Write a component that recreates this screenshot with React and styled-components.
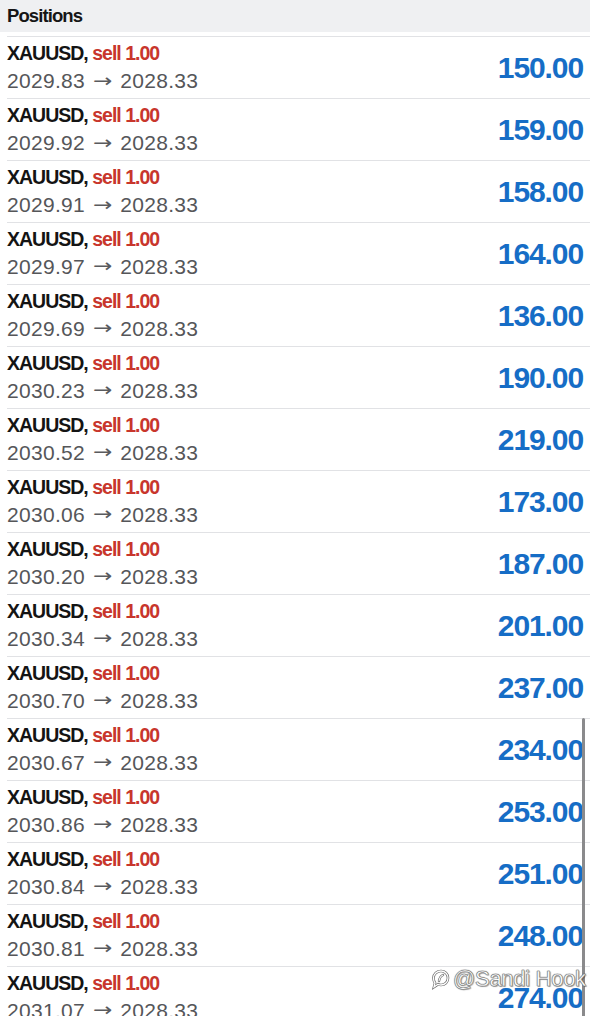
import React from "react";
import styled, { createGlobalStyle } from "styled-components";

const Global = createGlobalStyle`
  html, body { margin: 0; padding: 0; background: #ffffff; }
  body { font-family: "Liberation Sans", Arial, sans-serif; overflow: hidden; }
`;

const Screen = styled.div`
  position: relative;
  width: 590px;
  height: 1016px;
  overflow: hidden;
  background: #ffffff;
`;

const Header = styled.div`
  height: 32px;
  background: #eff0f2;
  display: flex;
  align-items: center;
  padding-left: 7px;
  font-weight: 700;
  font-size: 18.5px;
  letter-spacing: -0.9px;
  color: #161616;
`;

const List = styled.div`
  padding-top: 4px;
`;

const Row = styled.div`
  box-sizing: border-box;
  height: 62px;
  margin-left: 7px;
  padding-right: 7px;
  border-top: 1px solid #e1e2e5;
  display: flex;
  align-items: center;
  justify-content: space-between;
`;

const Info = styled.div`
  display: flex;
  flex-direction: column;
  align-self: flex-start;
  padding-top: 4px;
`;

const Title = styled.div`
  font-size: 19.5px;
  line-height: 24px;
  font-weight: 700;
  letter-spacing: -1px;
  color: #141414;
  white-space: nowrap;
`;

const Side = styled.span`
  color: #c8362c;
`;

const Prices = styled.div`
  font-size: 21px;
  line-height: 32px;
  height: 32px;
  color: #555659;
  white-space: nowrap;
  display: flex;
  align-items: baseline;
  letter-spacing: 0.3px;
`;

const Arrow = styled.span`
  font-family: "DejaVu Sans", sans-serif;
  font-size: 23px;
  line-height: 1;
  color: #5a5b5e;
  margin: 0 8px;
  transform: scaleY(0.8);
  display: inline-block;
  letter-spacing: 0;
`;

const Profit = styled.div`
  font-size: 30px;
  font-weight: 700;
  letter-spacing: -1.1px;
  color: #166dc6;
  padding-top: 1px;
`;

const ScrollBar = styled.div`
  position: absolute;
  right: 5px;
  top: 718px;
  bottom: 0;
  width: 3px;
  border-radius: 2px 2px 0 0;
  background: #8a8a8c;
`;

const Watermark = styled.div`
  position: absolute;
  left: 431px;
  top: 966px;
  display: flex;
  align-items: center;
  gap: 2px;
  font-family: "Liberation Sans", Arial, sans-serif;
  font-size: 22px;
  font-weight: 400;
  color: #ffffff;
  letter-spacing: -0.3px;
  text-shadow:
    0 0 1px #6a6a6a,
    0 0 1px #6a6a6a,
    1px 1px 1px rgba(0,0,0,0.35);
  -webkit-text-stroke: 0.4px #777;
`;

const rows = [
  ["2029.83", "150.00"],
  ["2029.92", "159.00"],
  ["2029.91", "158.00"],
  ["2029.97", "164.00"],
  ["2029.69", "136.00"],
  ["2030.23", "190.00"],
  ["2030.52", "219.00"],
  ["2030.06", "173.00"],
  ["2030.20", "187.00"],
  ["2030.34", "201.00"],
  ["2030.70", "237.00"],
  ["2030.67", "234.00"],
  ["2030.86", "253.00"],
  ["2030.84", "251.00"],
  ["2030.81", "248.00"],
  ["2031.07", "274.00"],
];

function WmIcon() {
  return (
    <svg width="20" height="22" viewBox="0 0 20 22" fill="none">
      <path
        d="M10 3c4 0 7 3 7 7s-3 7-7 7c-1 0-2-.3-3-.7L3 19l1-4c-1-1.4-1.5-3-1.5-5C2.5 6 6 3 10 3z"
        stroke="#6a6a6a"
        strokeWidth="2.6"
        fill="none"
      />
      <path
        d="M10 3c4 0 7 3 7 7s-3 7-7 7c-1 0-2-.3-3-.7L3 19l1-4c-1-1.4-1.5-3-1.5-5C2.5 6 6 3 10 3z"
        stroke="#ffffff"
        strokeWidth="1.3"
        fill="none"
      />
      <path d="M8 13c.5-3 1.5-5 4-6" stroke="#6a6a6a" strokeWidth="2.4" strokeLinecap="round" />
      <path d="M8 13c.5-3 1.5-5 4-6" stroke="#fff" strokeWidth="1.1" strokeLinecap="round" />
    </svg>
  );
}

export default function App() {
  return (
    <>
      <Global />
      <Screen>
        <Header>Positions</Header>
        <List>
          {rows.map(([open, profit], i) => (
            <Row key={i}>
              <Info>
                <Title>
                  XAUUSD, <Side>sell 1.00</Side>
                </Title>
                <Prices>
                  <span>{open}</span>
                  <Arrow>→</Arrow>
                  <span>2028.33</span>
                </Prices>
              </Info>
              <Profit>{profit}</Profit>
            </Row>
          ))}
        </List>
        <ScrollBar />
        <Watermark>
          <WmIcon />
          <span>@Sandi Hook</span>
        </Watermark>
      </Screen>
    </>
  );
}
